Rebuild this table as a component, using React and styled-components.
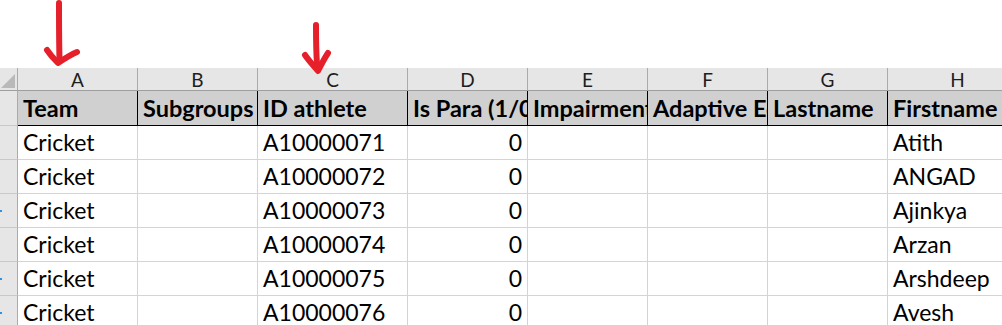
import React from 'react';
import styled, { createGlobalStyle } from 'styled-components';

const GlobalStyle = createGlobalStyle`
  html, body {
    margin: 0;
    padding: 0;
    background: #ffffff;
  }
  body {
    font-family: Lato, "Open Sans", sans-serif;
    overflow: hidden;
  }
`;

const columns = [
  { letter: 'A', field: 'Team', width: 120 },
  { letter: 'B', field: 'Subgroups', width: 120 },
  { letter: 'C', field: 'ID athlete', width: 150 },
  { letter: 'D', field: 'Is Para (1/0)', width: 120 },
  { letter: 'E', field: 'Impairment', width: 120 },
  { letter: 'F', field: 'Adaptive Equipment', width: 120 },
  { letter: 'G', field: 'Lastname', width: 120 },
  { letter: 'H', field: 'Firstname', width: 140 },
];

const rows = [
  ['Cricket', '', 'A10000071', 0, '', '', '', 'Atith'],
  ['Cricket', '', 'A10000072', 0, '', '', '', 'ANGAD'],
  ['Cricket', '', 'A10000073', 0, '', '', '', 'Ajinkya'],
  ['Cricket', '', 'A10000074', 0, '', '', '', 'Arzan'],
  ['Cricket', '', 'A10000075', 0, '', '', '', 'Arshdeep'],
  ['Cricket', '', 'A10000076', 0, '', '', '', 'Avesh'],
];

// rows whose header shows a little blue selection tick on its left edge
const tickedRows = [2, 4, 5];

export default function App() {
  return (
    <Page>
      <GlobalStyle />
      <TopGap />
      <Sheet>
        <Corner />
        {columns.map((c) => (
          <ColHead key={c.letter}>{c.letter}</ColHead>
        ))}

        <RowHead />
        {columns.map((c) => (
          <FieldCell key={c.field}>{c.field}</FieldCell>
        ))}

        {rows.map((r, i) => (
          <React.Fragment key={i}>
            <RowHead $tick={tickedRows.includes(i)} />
            {r.map((v, j) => (
              <Cell key={j} $num={typeof v === 'number'}>
                {v}
              </Cell>
            ))}
          </React.Fragment>
        ))}
      </Sheet>

      <Arrows width="1002" height="80" viewBox="0 0 1002 80">
        <g fill="none" stroke="#e5202a" strokeWidth="6" strokeLinecap="round" strokeLinejoin="round">
          <path d="M59 3 C59 20 59 40 59.5 59" />
          <path d="M47 50 C51 56 55 60 58 63 C64 59 70 55 77 52" />
          <path d="M316 25 C316 38 316 50 317 64" />
          <path d="M305 55 C309 61 314 66 318 71 C321 65 324 59 328 53" />
        </g>
      </Arrows>
    </Page>
  );
}

const Page = styled.div`
  position: relative;
  width: 1002px;
  height: 325px;
  overflow: hidden;
`;

const TopGap = styled.div`
  height: 68px;
`;

const Sheet = styled.div`
  display: grid;
  grid-template-columns: 18px ${columns.map((c) => `${c.width}px`).join(' ')};
  grid-template-rows: 23px 35px repeat(6, 34px);
`;

const Corner = styled.div`
  position: relative;
  box-sizing: border-box;
  background: #e6e6e6;
  border-right: 1px solid #ababab;
  border-bottom: 1px solid #9e9e9e;

  &::after {
    content: '';
    position: absolute;
    right: 2px;
    bottom: 2px;
    width: 0;
    height: 0;
    border-left: 14px solid transparent;
    border-bottom: 14px solid #b9b9b9;
  }
`;

const ColHead = styled.div`
  box-sizing: border-box;
  background: #e6e6e6;
  border-right: 1px solid #ababab;
  border-bottom: 1px solid #9e9e9e;
  display: flex;
  align-items: center;
  justify-content: center;
  font-size: 19px;
  color: #1e1e1e;
  line-height: 1;
  padding-top: 1px;
`;

const RowHead = styled.div`
  position: relative;
  box-sizing: border-box;
  background: #e6e6e6;
  border-right: 1px solid #ababab;
  border-bottom: 1px solid #c8c8c8;

  &::before {
    content: '';
    display: ${(p) => (p.$tick ? 'block' : 'none')};
    position: absolute;
    left: 0;
    top: 16px;
    width: 2px;
    height: 2px;
    background: #2f8fe6;
  }
`;

const FieldCell = styled.div`
  box-sizing: border-box;
  background: #d0d0d0;
  border-right: 1px solid #000000;
  border-bottom: 1.5px solid #000000;
  padding: 0 0 3px 5px;
  display: flex;
  align-items: flex-end;
  overflow: hidden;
  white-space: nowrap;
  font-size: 23.5px;
  font-weight: 700;
  color: #000000;
`;

const Cell = styled.div`
  box-sizing: border-box;
  background: #ffffff;
  border-right: 1px solid #d4d4d4;
  border-bottom: 1px solid #d4d4d4;
  padding: 0 5px 3px 5px;
  display: flex;
  align-items: flex-end;
  justify-content: ${(p) => (p.$num ? 'flex-end' : 'flex-start')};
  overflow: hidden;
  white-space: nowrap;
  font-size: 23px;
  color: #000000;
`;

const Arrows = styled.svg`
  position: absolute;
  left: 0;
  top: 0;
  pointer-events: none;
`;
